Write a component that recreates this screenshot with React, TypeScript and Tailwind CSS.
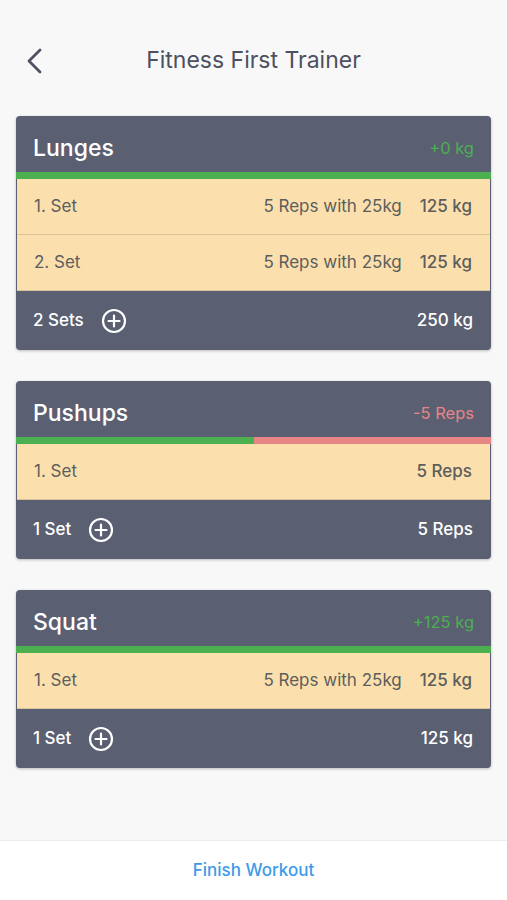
import React from "react";

type SetRow = { label: string; detail?: string; value: string };

type Exercise = {
  name: string;
  delta: string;
  deltaColor: string;
  progress: number;
  sets: SetRow[];
  summary: string;
  total: string;
};

const exercises: Exercise[] = [
  {
    name: "Lunges",
    delta: "+0 kg",
    deltaColor: "text-[#4caf50]",
    progress: 100,
    sets: [
      { label: "1. Set", detail: "5 Reps with 25kg", value: "125 kg" },
      { label: "2. Set", detail: "5 Reps with 25kg", value: "125 kg" },
    ],
    summary: "2 Sets",
    total: "250 kg",
  },
  {
    name: "Pushups",
    delta: "-5 Reps",
    deltaColor: "text-[#e88585]",
    progress: 50,
    sets: [{ label: "1. Set", value: "5 Reps" }],
    summary: "1 Set",
    total: "5 Reps",
  },
  {
    name: "Squat",
    delta: "+125 kg",
    deltaColor: "text-[#4caf50]",
    progress: 100,
    sets: [{ label: "1. Set", detail: "5 Reps with 25kg", value: "125 kg" }],
    summary: "1 Set",
    total: "125 kg",
  },
];

const PlusCircle = () => (
  <svg width="26" height="26" viewBox="0 0 26 26" fill="none" stroke="white" strokeWidth="2.2" strokeLinecap="round">
    <circle cx="13" cy="13" r="11" />
    <path d="M13 7.5v11M7.5 13h11" />
  </svg>
);

const Card = ({ ex }: { ex: Exercise }) => (
  <div className="rounded-[4px] overflow-hidden shadow-[0_1px_3px_rgba(0,0,0,0.25)] bg-[#5a5f72]">
    <div className="h-[56px] flex items-center justify-between pl-[17px] pr-[17px] pt-2">
      <span className="text-white text-[23px] font-medium">{ex.name}</span>
      <span className={`text-[16.5px] ${ex.deltaColor}`}>{ex.delta}</span>
    </div>
    <div className="h-[7px] flex bg-[#e88585]">
      <div className="bg-[#4caf50]" style={{ width: `${ex.progress}%` }} />
    </div>
    <div className="mx-px">
      {ex.sets.map((s, i) => (
        <div
          key={i}
          className="h-[56px] flex items-center bg-[#fbe0ad] pl-[17px] pr-[18px] text-[17px] text-[#5d5d5d] border-b border-[#d8c49a]"
        >
          <span className="flex-1">{s.label}</span>
          {s.detail && <span className="mr-[18px]">{s.detail}</span>}
          <span className="font-medium">{s.value}</span>
        </div>
      ))}
    </div>
    <div className="h-[59px] flex items-center pl-[17px] pr-[18px] text-white text-[17px] font-medium">
      <span>{ex.summary}</span>
      <span className="ml-[17px] flex">
        <PlusCircle />
      </span>
      <span className="ml-auto">{ex.total}</span>
    </div>
  </div>
);

const App = () => {
  return (
    <div
      className="w-[507px] h-[900px] bg-[#f8f8f9] flex flex-col"
      style={{ fontFamily: "Inter, 'Noto Sans', sans-serif" }}
    >
      <div className="h-[30px]" />
      <div className="h-[60px] relative flex items-center justify-center">
        <svg className="absolute left-[26px] top-[18px]" width="18" height="26" viewBox="0 0 18 26" fill="none" stroke="#4d505e" strokeWidth="2.8" strokeLinecap="round" strokeLinejoin="round">
          <path d="M14 2L3 13l11 11" />
        </svg>
        <span className="text-[23px] text-[#4d505e]">Fitness First Trainer</span>
      </div>
      <div className="flex-1 px-4 pt-[26px] flex flex-col gap-[31px]">
        {exercises.map((ex) => (
          <Card key={ex.name} ex={ex} />
        ))}
      </div>
      <div className="h-[60px] bg-white border-t border-[#ececec] flex items-center justify-center">
        <span className="text-[17px] font-medium text-[#3d9be9]">Finish Workout</span>
      </div>
    </div>
  );
};

export default App;
